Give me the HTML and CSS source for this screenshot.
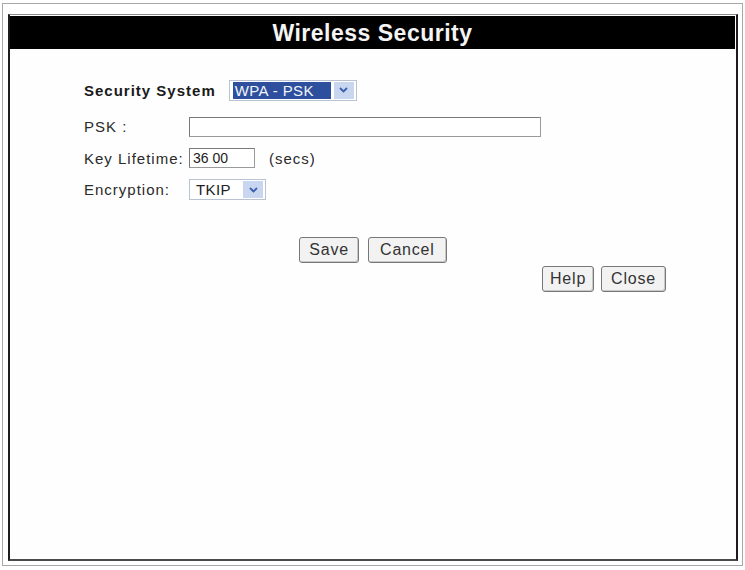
FILE: index.html
```html
<!DOCTYPE html>
<html lang="en">
<head>
    <meta charset="UTF-8">
    <meta name="viewport" content="width=device-width, initial-scale=1.0">
    <title>Wireless Security</title>
    <link rel="stylesheet" href="styles.css">
</head>
<body>
    <div class="frame">
        <div class="panel">
            <div class="title">Wireless Security</div>
            <form class="security-form">
                <div class="system-row">
                    <label class="system-label">Security System</label>
                    <span class="fake-select system-select">
                        <span class="sel-text highlighted">WPA - PSK</span>
                        <span class="sel-arrow">
                            <svg width="9" height="6" viewBox="0 0 9 6"><path d="M1 1 L4.5 4.5 L8 1" fill="none" stroke="#3a5fb0" stroke-width="1.8"/></svg>
                        </span>
                    </span>
                </div>
                <div class="fields">
                    <label>PSK :</label>
                    <input type="text" class="psk-input">

                    <label>Key Lifetime:</label>
                    <div class="inline">
                        <input type="text" class="life-input" value="36 00">
                        <span class="unit">(secs)</span>
                    </div>

                    <label>Encryption:</label>
                    <div>
                        <span class="fake-select enc-select">
                            <span class="sel-text">TKIP</span>
                            <span class="sel-arrow">
                                <svg width="9" height="6" viewBox="0 0 9 6"><path d="M1 1 L4.5 4.5 L8 1" fill="none" stroke="#3a5fb0" stroke-width="1.8"/></svg>
                            </span>
                        </span>
                    </div>
                </div>
                <div class="main-buttons">
                    <button type="button" class="save-btn">Save</button>
                    <button type="button" class="cancel-btn">Cancel</button>
                </div>
                <div class="side-buttons">
                    <button type="button">Help</button>
                    <button type="button" class="close-btn">Close</button>
                </div>
            </form>
        </div>
    </div>
</body>
</html>
```

FILE: styles.css
```css
body {
    margin: 0;
    background-color: #ffffff;
    font-family: 'Liberation Sans', Arial, sans-serif;
    color: #1e1e1e;
}

.frame {
    margin: 3px 2px 2px 2px;
    height: 563px;
    box-sizing: border-box;
    border: 1px solid #a8a8a8;
    padding: 10px 4px 4px 5px;
}

.panel {
    height: 100%;
    box-sizing: border-box;
    border-top: 1px solid #8a8a8a;
    border-left: 2px solid #1c1c1c;
    border-right: 2px solid #1c1c1c;
    border-bottom: 2px solid #4a4a4a;
    background-color: #fefefe;
}

.title {
    background-color: #000000;
    color: #f4f4f4;
    font-weight: bold;
    font-size: 23px;
    letter-spacing: 0.5px;
    height: 33px;
    line-height: 34px;
    text-align: center;
    margin: 1px 1px 0 0;
}

.security-form {
    padding: 30px 0 0 74px;
    font-size: 15px;
    letter-spacing: 1px;
}

.system-row {
    display: flex;
    align-items: center;
    gap: 13px;
    height: 22px;
}

.system-label {
    font-weight: bold;
    letter-spacing: 1px;
    color: #1a1a1a;
}

.fake-select {
    display: inline-flex;
    align-items: center;
    box-sizing: border-box;
    height: 21px;
    border: 1px solid #b9c2d0;
    background-color: #ffffff;
    padding: 1px 2px 1px 3px;
    letter-spacing: 0.4px;
}

.system-select {
    width: 128px;
}

.sel-text {
    flex: 1;
    height: 17px;
    line-height: 17px;
    padding-left: 2px;
    color: #222;
}

.sel-text.highlighted {
    background-color: #2d4f9e;
    color: #f2f4fa;
}

.sel-arrow {
    width: 20px;
    height: 17px;
    margin-left: 3px;
    background-color: #c8d6ef;
    display: flex;
    align-items: center;
    justify-content: center;
}

.fields {
    display: grid;
    grid-template-columns: 105px auto;
    grid-auto-rows: 31.5px;
    align-items: center;
    margin-top: 10px;
    color: #2a2a2a;
}

.fields input {
    box-sizing: border-box;
    height: 20px;
    border: 1px solid #9a9a9a;
    border-top-color: #7a7a7a;
    border-left-color: #7a7a7a;
    font-family: 'Liberation Sans', Arial, sans-serif;
    font-size: 14px;
    color: #222;
    padding: 0 3px;
    margin: 0;
}

.psk-input {
    width: 352px;
}

.life-input {
    width: 66px;
}

.inline {
    display: flex;
    align-items: center;
}

.unit {
    margin-left: 14px;
}

.enc-select {
    width: 77px;
    padding-left: 4px;
}

.main-buttons {
    display: flex;
    justify-content: center;
    gap: 9px;
    margin: 31px 0 0 -74px;
}

.side-buttons {
    display: flex;
    justify-content: flex-end;
    gap: 7px;
    margin: 3px 70px 0 0;
}

button {
    font-family: 'Liberation Sans', Arial, sans-serif;
    font-size: 16px;
    letter-spacing: 0.8px;
    color: #333;
    background-color: #f2f2f2;
    border: 1px solid #777;
    border-radius: 3px;
    box-shadow: inset -1px -1px 0 #c8c8c8;
    height: 26px;
    padding: 0 7px;
}

.save-btn {
    padding: 0 9px;
}

.cancel-btn {
    padding: 0 11px;
}

.close-btn {
    padding: 0 9px;
}
```
